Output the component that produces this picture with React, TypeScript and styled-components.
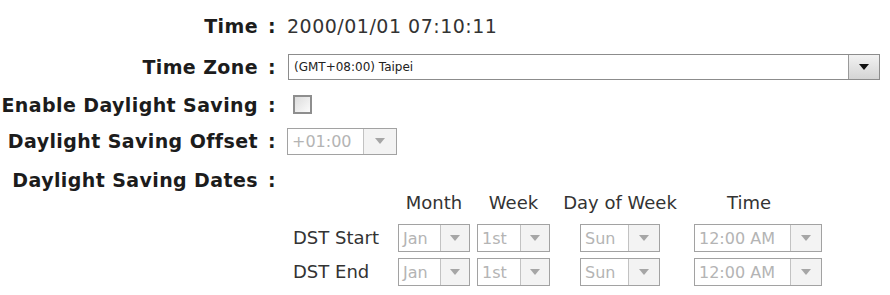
import styled, { createGlobalStyle } from 'styled-components';

const GlobalStyle = createGlobalStyle`
  body {
    margin: 0;
    background: #ffffff;
    font-family: "DejaVu Sans", "Liberation Sans", sans-serif;
  }
`;

const Form = styled.div`
  display: flex;
  flex-direction: column;
  width: 890px;
  padding-top: 6px;
`;

const Row = styled.div<{ $h: number; $top?: boolean }>`
  display: flex;
  align-items: ${p => (p.$top ? 'flex-start' : 'center')};
  height: ${p => p.$h}px;
`;

const Label = styled.div<{ $mt?: number }>`
  display: flex;
  flex-shrink: 0;
  margin-top: ${p => p.$mt ?? 0}px;
  font-size: 19px;
  font-weight: bold;
  line-height: 24px;
  color: #1c1c1c;
  white-space: nowrap;
`;

const LabelText = styled.span`
  width: 258px;
  text-align: right;
  letter-spacing: 0.4px;
`;

const Colon = styled.span`
  width: 29px;
  padding-left: 10px;
  box-sizing: border-box;
`;

const ValueText = styled.span`
  font-size: 19px;
  line-height: 24px;
  letter-spacing: 0.5px;
  color: #333;
`;

const SelectBox = styled.div<{ $w: number; $h: number; $disabled?: boolean }>`
  display: flex;
  box-sizing: border-box;
  width: ${p => p.$w}px;
  height: ${p => p.$h}px;
  border: 1px solid ${p => (p.$disabled ? '#a2a2a2' : '#8c8c8c')};
  background: #fff;
  margin-left: ${p => (p.$disabled ? 0 : 1)}px;
`;

const SelectText = styled.span<{ $small?: boolean; $disabled?: boolean }>`
  flex: 1;
  display: flex;
  align-items: center;
  padding-left: ${p => (p.$small ? 5 : 4)}px;
  font-size: ${p => (p.$small ? 12 : 16)}px;
  color: ${p => (p.$disabled ? '#b4b4b4' : '#222')};
  white-space: nowrap;
  overflow: hidden;
`;

const ArrowButton = styled.span<{ $w: number; $disabled?: boolean }>`
  display: flex;
  align-items: center;
  justify-content: center;
  width: ${p => p.$w}px;
  border-left: 1px solid ${p => (p.$disabled ? '#c2c2c2' : '#9a9a9a')};
  background: ${p =>
    p.$disabled ? '#f3f3f3' : 'linear-gradient(#f2f2f2, #d4d4d4)'};
`;

const Triangle = styled.span<{ $disabled?: boolean }>`
  width: 0;
  height: 0;
  border-left: 5px solid transparent;
  border-right: 5px solid transparent;
  border-top: 6px solid ${p => (p.$disabled ? '#a6a6a6' : '#111')};
`;

const CheckBox = styled.span`
  display: block;
  box-sizing: border-box;
  width: 19px;
  height: 19px;
  margin-left: 6px;
  border: 2px solid #8e8e8e;
  background: linear-gradient(135deg, #dcdcdc, #fbfbfb);
`;

const DstTable = styled.div`
  display: grid;
  grid-template-columns: 98px 72px 73px 126px 136px;
  grid-template-rows: 30px 34px 34px;
  column-gap: 7px;
  margin-left: 6px;
  padding-top: 31px;
  font-size: 18px;
  color: #333;
`;

const HeadCell = styled.span<{ $shift?: number }>`
  align-self: start;
  justify-self: center;
  margin-right: ${p => p.$shift ?? 0}px;
  line-height: 24px;
`;

const RowLabel = styled.span`
  align-self: center;
  line-height: 24px;
  white-space: nowrap;
`;

const Cell = styled.span<{ $center?: boolean }>`
  align-self: center;
  justify-self: ${p => (p.$center ? 'center' : 'start')};
`;

type SelectProps = {
  value: string;
  width: number;
  height: number;
  arrow: number;
  disabled?: boolean;
  small?: boolean;
};

const Select = ({ value, width, height, arrow, disabled, small }: SelectProps) => (
  <SelectBox $w={width} $h={height} $disabled={disabled}>
    <SelectText $small={small} $disabled={disabled}>
      {value}
    </SelectText>
    <ArrowButton $w={arrow} $disabled={disabled}>
      <Triangle $disabled={disabled} />
    </ArrowButton>
  </SelectBox>
);

const Field = ({ label, mt }: { label: string; mt?: number }) => (
  <Label $mt={mt}>
    <LabelText>{label}</LabelText>
    <Colon>:</Colon>
  </Label>
);

const dstRows = ['DST Start', 'DST End'];

const App = () => {
  return (
    <>
      <GlobalStyle />
      <Form>
        <Row $h={40}>
          <Field label="Time" />
          <ValueText>2000/01/01 07:10:11</ValueText>
        </Row>
        <Row $h={41}>
          <Field label="Time Zone" />
          <Select value="(GMT+08:00) Taipei" width={592} height={26} arrow={30} small />
        </Row>
        <Row $h={35}>
          <Field label="Enable Daylight Saving" />
          <CheckBox />
        </Row>
        <Row $h={38}>
          <Field label="Daylight Saving Offset" />
          <Select value="+01:00" width={110} height={27} arrow={32} disabled />
        </Row>
        <Row $h={130} $top>
          <Field label="Daylight Saving Dates" mt={8} />
          <DstTable>
            <span />
            <HeadCell>Month</HeadCell>
            <HeadCell>Week</HeadCell>
            <HeadCell>Day of Week</HeadCell>
            <HeadCell $shift={18}>Time</HeadCell>
            {dstRows.map(name => [
              <RowLabel key={name + '-l'}>{name}</RowLabel>,
              <Cell key={name + '-m'}>
                <Select value="Jan" width={72} height={28} arrow={28} disabled />
              </Cell>,
              <Cell key={name + '-w'}>
                <Select value="1st" width={73} height={28} arrow={28} disabled />
              </Cell>,
              <Cell key={name + '-d'} $center>
                <Select value="Sun" width={80} height={28} arrow={30} disabled />
              </Cell>,
              <Cell key={name + '-t'} $center>
                <Select value="12:00 AM" width={128} height={28} arrow={30} disabled />
              </Cell>,
            ])}
          </DstTable>
        </Row>
      </Form>
    </>
  );
};

export default App;
